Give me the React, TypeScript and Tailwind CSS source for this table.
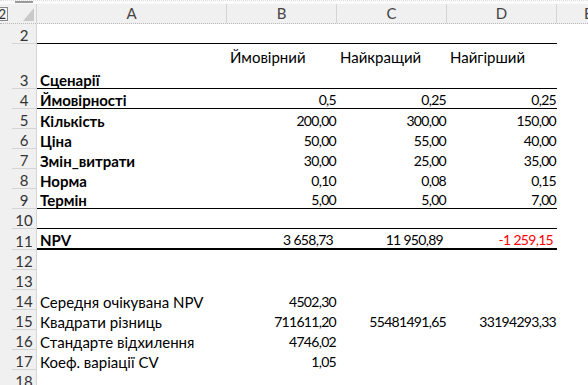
import React from "react";

type Row = {
  n: number;
  h: string;
  a?: string;
  bold?: boolean;
  b?: string;
  c?: string;
  d?: string;
  border?: string;
  pr?: string;
  red?: boolean;
};

const rows: Row[] = [
  { n: 4, h: "h-[20px]", a: "Ймовірності", bold: true, b: "0,5", c: "0,25", d: "0,25", border: "border-b border-black" },
  { n: 5, h: "h-[20px]", a: "Кількість", bold: true, b: "200,00", c: "300,00", d: "150,00" },
  { n: 6, h: "h-[20px]", a: "Ціна", bold: true, b: "50,00", c: "55,00", d: "40,00" },
  { n: 7, h: "h-[20px]", a: "Змін_витрати", bold: true, b: "30,00", c: "25,00", d: "35,00" },
  { n: 8, h: "h-[20px]", a: "Норма", bold: true, b: "0,10", c: "0,08", d: "0,15" },
  { n: 9, h: "h-[20px]", a: "Термін", bold: true, b: "5,00", c: "5,00", d: "7,00", border: "border-b border-black" },
  { n: 10, h: "h-[20px]", border: "border-b border-black" },
  { n: 11, h: "h-[21px]", a: "NPV", bold: true, b: "3 658,73", c: "11 950,89", d: "-1 259,15", border: "border-b-2 border-black", pr: "pr-[4px]", red: true },
  { n: 12, h: "h-[20px]" },
  { n: 13, h: "h-[20px]" },
  { n: 14, h: "h-[20px]", a: "Середня очікувана NPV", b: "4502,30" },
  { n: 15, h: "h-[20px]", a: "Квадрати різниць", b: "711611,20", c: "55481491,65", d: "33194293,33" },
  { n: 16, h: "h-[20px]", a: "Стандарте відхилення", b: "4746,02" },
  { n: 17, h: "h-[20px]", a: "Коеф. варіації CV", b: "1,05" },
  { n: 18, h: "h-[20px]" },
];

// Lato digits run wider than the sheet's, so numbers get a touch smaller and tighter
const num = "text-[14px] tracking-[-0.7px]";

function RowHead({ n, h }: { n?: number; h: string }) {
  return (
    <div className={`flex ${h}`}>
      <div className="w-[12px] shrink-0 bg-[#f0f0f0]" />
      <div className="w-[25px] shrink-0 bg-[#f0f0f0] border-r border-b border-[#d4d4d4] flex items-end justify-center text-[15px] leading-[16px] text-[#333]">
        {n}
      </div>
    </div>
  );
}

export default function App() {
  return (
    <div className="w-[588px] h-[385px] overflow-hidden bg-white text-black [font-family:Lato,'Liberation_Sans',sans-serif] relative">
      {/* top strip */}
      <div className="h-[4px] flex bg-[#fbfbfb] border-t border-dotted border-[#dcdcdc]">
        <div className="ml-[15px] w-[18px] h-[2px] bg-[#9a9a9a]" />
      </div>
      {/* outline level button */}
      <div className="absolute left-[-7px] top-[7px] w-[15px] h-[14px] border border-[#8a8a8a] bg-[#f4f4f4] text-[13px] leading-[12px] text-[#333] flex items-center justify-end pr-[1px]">
        2
      </div>
      {/* column header */}
      <div className="flex h-[20px] bg-[#f0f0f0] border-b border-dotted border-[#b8b8b8] text-[15px] leading-[19px] text-[#444]">
        <div className="w-[12px] shrink-0" />
        <div className="w-[25px] shrink-0 border-r border-[#d4d4d4] relative">
          <svg className="absolute left-[11px] top-[4px]" width="11" height="13" viewBox="0 0 11 13">
            <polygon points="11,0 11,13 0,13" fill="#c9c9c9" />
          </svg>
        </div>
        <div className="w-[190px] shrink-0 border-r border-[#d4d4d4] text-center">A</div>
        <div className="w-[110px] shrink-0 border-r border-[#d4d4d4] text-center">B</div>
        <div className="w-[110px] shrink-0 border-r border-[#d4d4d4] text-center">C</div>
        <div className="w-[110px] shrink-0 border-r border-[#d4d4d4] text-center">D</div>
        <div className="flex-1 pl-[27px] text-[#444]">E</div>
      </div>

      {/* row 2 */}
      <div className="flex h-[20px]">
        <RowHead n={2} h="h-[20px]" />
        <div className="w-[520px] border-b border-black" />
      </div>

      {/* row 3 */}
      <div className="flex h-[45px]">
        <RowHead n={3} h="h-[45px]" />
        <div className="w-[190px] shrink-0 border-b border-black flex items-end pl-[3px] font-bold text-[15px] leading-[16px]">
          Сценарії
        </div>
        <div className="w-[110px] shrink-0 border-b border-black pl-[3px] pt-[4px] text-[15px] leading-[19px]">Ймовірний</div>
        <div className="w-[110px] shrink-0 border-b border-black pl-[3px] pt-[4px] text-[15px] leading-[19px]">Найкращий</div>
        <div className="w-[110px] shrink-0 border-b border-black pl-[3px] pt-[4px] text-[15px] leading-[19px]">Найгірший</div>
      </div>

      {rows.map((r) => (
        <div key={r.n} className={`flex ${r.h}`}>
          <RowHead n={r.n} h={r.h} />
          <div className={`w-[520px] shrink-0 flex text-[15px] leading-[16px] ${r.border ?? ""}`}>
            <div className={`w-[190px] shrink-0 pl-[3px] flex items-end ${r.bold ? "font-bold" : ""}`}>{r.a}</div>
            <div className={`w-[110px] shrink-0 flex items-end justify-end ${num} ${r.pr ?? "pr-[1px]"}`}>{r.b}</div>
            <div className={`w-[110px] shrink-0 flex items-end justify-end ${num} ${r.pr ?? "pr-[1px]"}`}>{r.c}</div>
            <div className={`w-[110px] shrink-0 flex items-end justify-end ${num} ${r.pr ?? "pr-[1px]"} ${r.red ? "text-[#ff0000]" : ""}`}>{r.d}</div>
          </div>
        </div>
      ))}
    </div>
  );
}
